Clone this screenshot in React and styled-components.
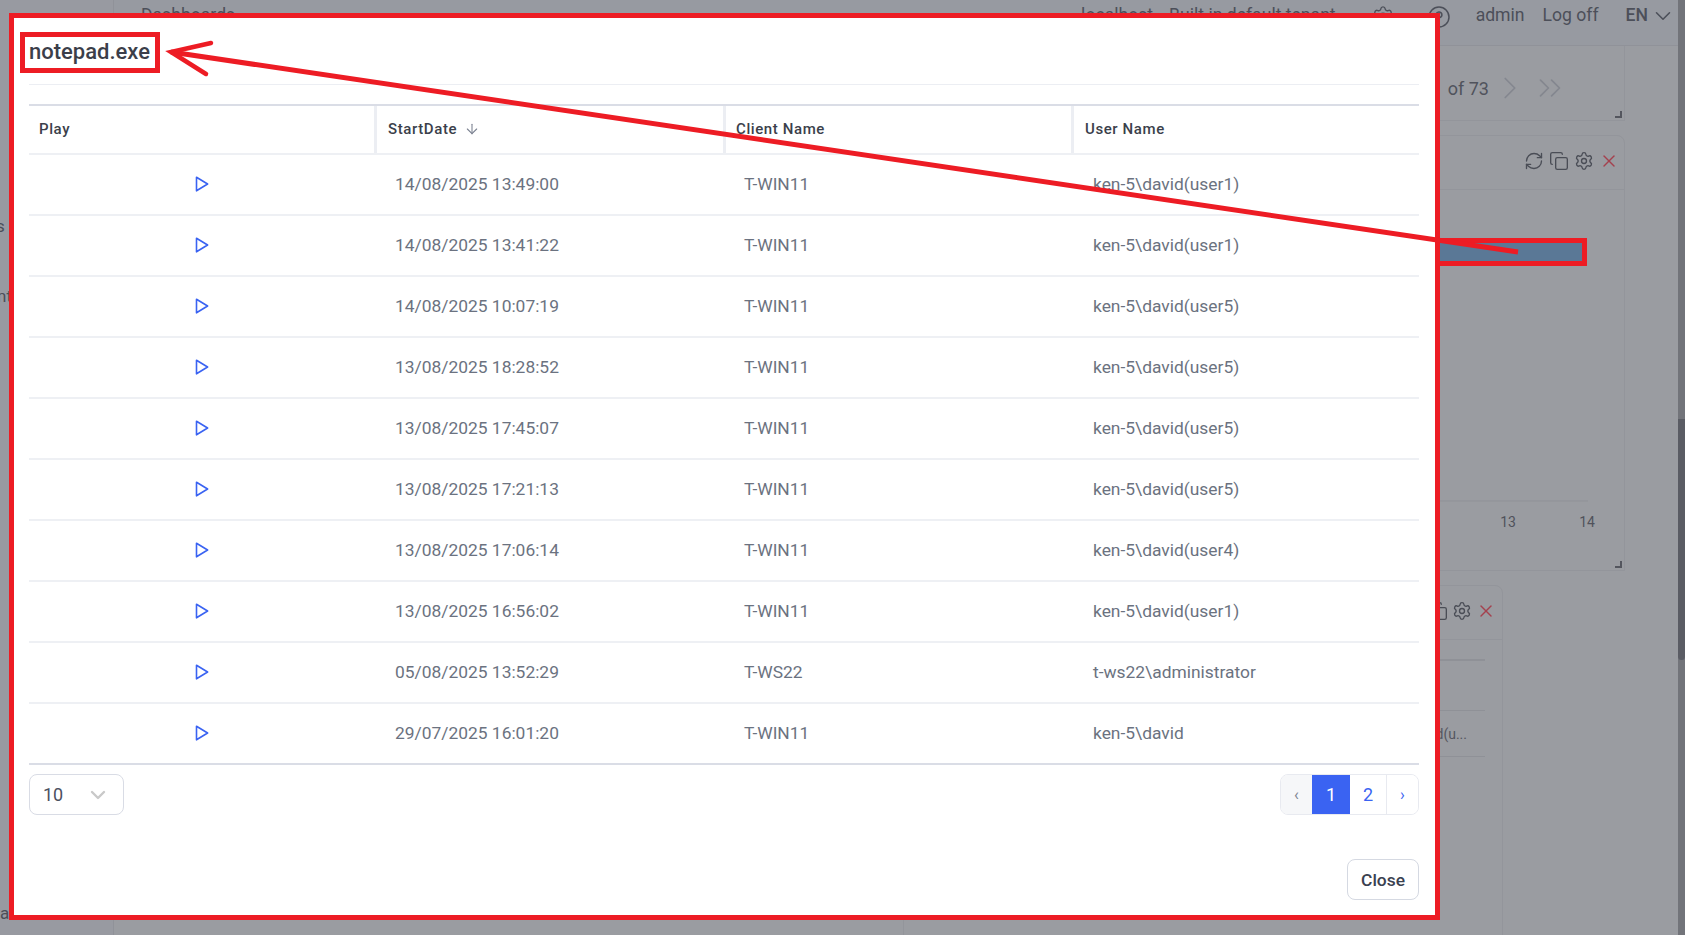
import styled, { createGlobalStyle } from "styled-components"
import { ArrowDown, ChevronDown, ChevronRight, ChevronsRight, CircleHelp, Copy, RefreshCw, Settings, X } from "lucide-react"

const GlobalStyle = createGlobalStyle`
  html, body {
    margin: 0;
    padding: 0;
    overflow: hidden;
    font-family: Roboto, "Liberation Sans", sans-serif;
  }
`

const rows = [
  ["14/08/2025 13:49:00", "T-WIN11", "ken-5\\david(user1)"],
  ["14/08/2025 13:41:22", "T-WIN11", "ken-5\\david(user1)"],
  ["14/08/2025 10:07:19", "T-WIN11", "ken-5\\david(user5)"],
  ["13/08/2025 18:28:52", "T-WIN11", "ken-5\\david(user5)"],
  ["13/08/2025 17:45:07", "T-WIN11", "ken-5\\david(user5)"],
  ["13/08/2025 17:21:13", "T-WIN11", "ken-5\\david(user5)"],
  ["13/08/2025 17:06:14", "T-WIN11", "ken-5\\david(user4)"],
  ["13/08/2025 16:56:02", "T-WIN11", "ken-5\\david(user1)"],
  ["05/08/2025 13:52:29", "T-WS22", "t-ws22\\administrator"],
  ["29/07/2025 16:01:20", "T-WIN11", "ken-5\\david"],
]

const Page = styled.div`
  position: relative;
  width: 1685px;
  height: 935px;
  overflow: hidden;
  display: grid;
  grid-template-columns: 114px 1fr 7px;
  background: #9a9ca1;
  color: #4c4f59;
`

const Sidebar = styled.aside`
  background: #989aa1;
  border-right: 1px solid #909299;
  font-size: 17px;
  display: flex;
  flex-direction: column;
  padding-top: 216px;
`

const SideItem = styled.div`
  height: ${(p) => p.$height}px;
  margin-left: ${(p) => p.$indent}px;
  line-height: 20px;
`

const Main = styled.main`
  min-width: 0;
  display: flex;
  flex-direction: column;
`

const Topbar = styled.header`
  height: 46px;
  flex: none;
  box-sizing: border-box;
  border-bottom: 1px solid #909299;
  background: #979aa1;
  display: flex;
  align-items: flex-start;
  padding: 5px 2px 0 27px;
  font-size: 17.6px;
  line-height: 21px;
`

const Crumb = styled.div`
  flex: 1;
`

const TopLink = styled.span`
  margin-left: ${(p) => p.$gap}px;
  display: flex;
  align-items: center;
  font-weight: ${(p) => (p.$bold ? 500 : 400)};
`

const LangChevron = styled(ChevronDown)`
  margin: -3px 0 -3px 2px;
`

const Panels = styled.div`
  flex: 1;
  display: flex;
  flex-direction: column;
  align-items: flex-end;
  padding-right: 53px;
`

const PagerCard = styled.section`
  width: 800px;
  height: 75px;
  box-sizing: border-box;
  border-bottom: 1px solid #93959b;
  border-right: 1px solid #93959b;
  display: flex;
  align-items: center;
  gap: 2px;
  padding: 10px 55px 0 0;
  justify-content: flex-end;
  font-size: 18px;
  color: #50535c;
  position: relative;
`

const ResizeMark = styled.span`
  position: absolute;
  right: 2px;
  bottom: 2px;
  width: 5px;
  height: 5px;
  border-right: 2px solid #54565e;
  border-bottom: 2px solid #54565e;
`

const ChartCard = styled.section`
  width: 800px;
  height: 436px;
  margin-top: 14px;
  box-sizing: border-box;
  border: 1px solid #93959b;
  border-radius: 8px 8px 0 0;
  position: relative;
`

const CardHead = styled.div`
  height: 54px;
  box-sizing: border-box;
  border-bottom: 1px solid #93959b;
  display: flex;
  align-items: center;
  justify-content: flex-end;
  gap: 5px;
  padding: 0 5px 4px 0;
  color: #4a4d56;
`

const ListCard = styled.section`
  width: 600px;
  height: 400px;
  margin: 14px 122px 0 0;
  box-sizing: border-box;
  border: 1px solid #93959b;
  border-radius: 8px 8px 0 0;
`

const ListHead = styled(CardHead)`
  gap: 4px;
  padding-right: 6px;
`

const ListLine = styled.div`
  height: ${(p) => p.$height}px;
  margin-right: 17px;
  border-bottom: ${(p) => p.$weight}px solid #8f9197;
  display: flex;
  align-items: center;
  justify-content: flex-end;
  padding-right: 18px;
  font-size: 14px;
  color: #54565f;
`

const Scrollbar = styled.div`
  background: #72747a;
  padding-top: 419px;
`

const ScrollThumb = styled.div`
  height: 241px;
  background: #5a5c64;
  border-radius: 0 0 4px 4px;
`

const Modal = styled.div`
  position: absolute;
  left: 9px;
  top: 13px;
  width: 1431px;
  height: 907px;
  box-sizing: border-box;
  border: 5px solid #ed1c24;
  background: #fff;
  padding: 14px 16px 15px 15px;
  display: flex;
  flex-direction: column;
  z-index: 2;
`

const Title = styled.h1`
  margin: 0 0 0 -9px;
  align-self: flex-start;
  width: 140px;
  height: 41px;
  box-sizing: border-box;
  border: 5px solid #ed1c24;
  font-size: 22px;
  font-weight: 500;
  line-height: 29px;
  padding-left: 4px;
  color: #3b3e49;
  white-space: nowrap;
`

const TitleRule = styled.div`
  height: 1px;
  margin: 11px 0 19px;
  background: #eceef3;
`

const Table = styled.table`
  width: 1390px;
  table-layout: fixed;
  border-collapse: separate;
  border-spacing: 0;
  border-top: 2px solid #dadde6;
  border-bottom: 2px solid #dadde6;
`

const HeadCell = styled.th`
  width: ${(p) => p.$width}px;
  height: 47px;
  box-sizing: border-box;
  padding: 0 0 2px ${(p) => p.$pad}px;
  text-align: left;
  font-size: 15px;
  font-weight: 500;
  letter-spacing: 0.6px;
  color: #3b3f4b;
  border-right: ${(p) => (p.$last ? 0 : 3)}px solid #eceef3;
`

const SortIcon = styled(ArrowDown)`
  vertical-align: -3px;
  margin-left: 7px;
  color: #7a8090;
`

const Cell = styled.td`
  height: 61px;
  box-sizing: border-box;
  padding: 0 0 1px ${(p) => p.$pad}px;
  font-size: 17.4px;
  color: #6b7280;
  border-top: 2px solid #eef0f4;
`

const PlayCell = styled(Cell)`
  text-align: center;
  padding: 0 3px 1px 0;
`

const PlayIcon = styled.svg`
  display: block;
  margin: -1px auto 0;
`

const Footer = styled.div`
  margin-top: 9px;
  display: flex;
  justify-content: space-between;
`

const PageSize = styled.div`
  width: 95px;
  height: 41px;
  box-sizing: border-box;
  border: 1px solid #d9dce5;
  border-radius: 8px;
  display: flex;
  align-items: center;
  justify-content: space-between;
  padding: 0 13px;
  font-size: 18px;
  color: #4b5060;
`

const Pagination = styled.div`
  display: flex;
  height: 41px;
  box-sizing: border-box;
  border: 1px solid #e8eaf0;
  border-radius: 8px;
  overflow: hidden;
`

const PageButton = styled.div`
  width: ${(p) => p.$width}px;
  display: flex;
  align-items: center;
  justify-content: center;
  font-size: ${(p) => (p.$arrow ? 16 : 18)}px;
  color: ${(p) => (p.$active ? "#fff" : p.$muted ? "#7b8290" : "#3a63f2")};
  background: ${(p) => (p.$active ? "#3a63f2" : p.$muted ? "#f6f7f9" : "#fff")};
  border-left: ${(p) => (p.$divided ? "1px solid #e8eaf0" : "0")};
`

const Actions = styled.div`
  margin-top: auto;
  display: flex;
  justify-content: flex-end;
`

const CloseButton = styled.button`
  width: 72px;
  height: 41px;
  border: 1px solid #d5d9e2;
  border-radius: 8px;
  background: #fff;
  font-family: inherit;
  font-size: 17.4px;
  font-weight: 500;
  color: #3a4150;
`

const Annotations = styled.svg`
  position: absolute;
  left: 0;
  top: 0;
  z-index: 3;
  pointer-events: none;
`

function Play() {
  return (
    <PlayIcon width="14" height="16" viewBox="0 0 14 16" fill="none" stroke="#3a63f2" strokeWidth="1.6" strokeLinejoin="round">
      <path d="M1.5 1.2 L12.6 8 L1.5 14.8 Z" />
    </PlayIcon>
  )
}

function Chart() {
  // the card starts at x 825, y 189 once the header is taken off
  return (
    <svg width="798" height="380" viewBox="825 190 798 380" style={{ display: "block" }}>
      <rect x="1000" y="240" width="582" height="24" fill="#5a7896" />
      <line x1="880" y1="501" x2="1587" y2="501" stroke="#8f9197" />
      <text x="1507" y="527" textAnchor="middle" fontSize="14" fill="#50525b" fontFamily="Roboto, sans-serif">13</text>
      <text x="1586" y="527" textAnchor="middle" fontSize="14" fill="#50525b" fontFamily="Roboto, sans-serif">14</text>
    </svg>
  )
}

export default function App() {
  return (
    <Page>
      <GlobalStyle />
      <Sidebar>
        <SideItem $height={70} $indent={-4}>s</SideItem>
        <SideItem $height={617} $indent={-3}>nt</SideItem>
        <SideItem $height={20} $indent={0}>a</SideItem>
      </Sidebar>
      <Main>
        <Topbar>
          <Crumb>Dashboards</Crumb>
          <TopLink>localhost</TopLink>
          <TopLink $gap={16}>Built in default tenant</TopLink>
          <TopLink $gap={36}><Settings size={22} strokeWidth={1.5} /></TopLink>
          <TopLink $gap={33}><CircleHelp size={24} strokeWidth={1.5} /></TopLink>
          <TopLink $gap={25}>admin</TopLink>
          <TopLink $gap={18}>Log off</TopLink>
          <TopLink $gap={27} $bold>EN<LangChevron size={26} strokeWidth={1.4} /></TopLink>
        </Topbar>
        <Panels>
          <PagerCard>
            <span>of 73</span>
            <ChevronRight size={38} strokeWidth={1.1} color="#84878f" />
            <ChevronsRight size={38} strokeWidth={1.1} color="#84878f" />
            <ResizeMark />
          </PagerCard>
          <ChartCard>
            <CardHead>
              <RefreshCw size={20} strokeWidth={1.6} />
              <Copy size={20} strokeWidth={1.6} />
              <Settings size={20} strokeWidth={1.6} />
              <X size={20} strokeWidth={1.7} color="#a4414e" />
            </CardHead>
            <Chart />
            <ResizeMark />
          </ChartCard>
          <ListCard>
            <ListHead>
              <Copy size={20} strokeWidth={1.6} />
              <Settings size={20} strokeWidth={1.6} />
              <X size={20} strokeWidth={1.7} color="#a4414e" />
            </ListHead>
            <ListLine $height={19} $weight={2} />
            <ListLine $height={49} $weight={1} />
            <ListLine $height={45} $weight={1}>d(u...</ListLine>
          </ListCard>
        </Panels>
      </Main>
      <Scrollbar>
        <ScrollThumb />
      </Scrollbar>

      <Modal>
        <Title>notepad.exe</Title>
        <TitleRule />
        <Table>
          <thead>
            <tr>
              <HeadCell $width={348} $pad={10}>Play</HeadCell>
              <HeadCell $width={349} $pad={11}>StartDate<SortIcon size={16} strokeWidth={1.6} /></HeadCell>
              <HeadCell $width={348} $pad={10}>Client Name</HeadCell>
              <HeadCell $width={345} $pad={11} $last>User Name</HeadCell>
            </tr>
          </thead>
          <tbody>
            {rows.map((row) => (
              <tr key={row[0]}>
                <PlayCell><Play /></PlayCell>
                <Cell $pad={18}>{row[0]}</Cell>
                <Cell $pad={18}>{row[1]}</Cell>
                <Cell $pad={19}>{row[2]}</Cell>
              </tr>
            ))}
          </tbody>
        </Table>
        <Footer>
          <PageSize>
            10
            <ChevronDown size={24} strokeWidth={2.4} color="#c9c9c9" />
          </PageSize>
          <Pagination>
            <PageButton $width={31} $arrow $muted>‹</PageButton>
            <PageButton $width={38} $active>1</PageButton>
            <PageButton $width={36}>2</PageButton>
            <PageButton $width={31} $arrow $divided>›</PageButton>
          </Pagination>
        </Footer>
        <Actions>
          <CloseButton>Close</CloseButton>
        </Actions>
      </Modal>

      <Annotations width="1685" height="935" fill="none" stroke="#ed1c24" strokeWidth="5" strokeLinecap="round">
        <rect x="1437.5" y="240.5" width="147" height="23" strokeLinecap="butt" />
        <path d="M1518 252 L171 52" strokeLinecap="butt" />
        <path d="M211 43 L171 52 L206 74" strokeWidth="4.5" />
      </Annotations>
    </Page>
  )
}
